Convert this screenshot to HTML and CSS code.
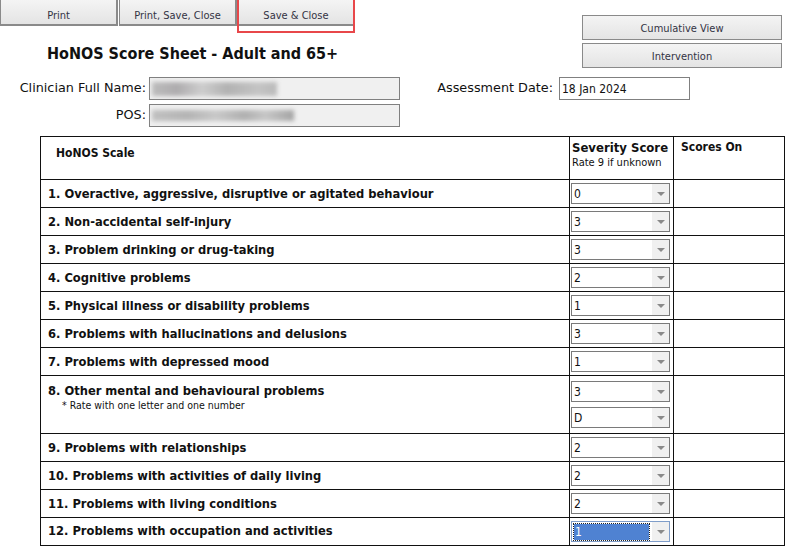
FILE: index.html
```html
<!DOCTYPE html>
<html lang="en">
<head>
    <meta charset="UTF-8">
    <title>HoNOS Score Sheet</title>
    <link rel="stylesheet" href="styles.css">
</head>
<body>
    <div class="head">
        <div class="head-left">
            <div class="toolbar">
                <button class="btn">Print</button>
                <button class="btn">Print, Save, Close</button>
                <span class="highlight"><button class="btn">Save &amp; Close</button></span>
            </div>
            <h1>HoNOS Score Sheet - Adult and 65+</h1>
        </div>
        <div class="head-right">
            <button class="btn side-btn">Cumulative View</button>
            <button class="btn side-btn">Intervention</button>
        </div>
    </div>

    <div class="fields">
        <label class="field-label">Clinician Full Name:</label>
        <div class="field readonly"><span class="blur blur-name"></span></div>
        <label class="field-label date-label">Assessment Date:</label>
        <div class="field date">18 Jan 2024</div>

        <label class="field-label">POS:</label>
        <div class="field readonly"><span class="blur blur-pos"></span></div>
    </div>

    <table class="scores">
        <thead>
            <tr class="head-row">
                <th class="scale-head">HoNOS Scale</th>
                <th class="severity-head">Severity Score<small>Rate 9 if unknown</small></th>
                <th class="on-head">Scores On</th>
            </tr>
        </thead>
        <tbody id="rows"></tbody>
    </table>

    <script>
        const items = [
            ['1. Overactive, aggressive, disruptive or agitated behaviour', ['0']],
            ['2. Non-accidental self-injury', ['3']],
            ['3. Problem drinking or drug-taking', ['3']],
            ['4. Cognitive problems', ['2']],
            ['5. Physical illness or disability problems', ['1']],
            ['6. Problems with hallucinations and delusions', ['3']],
            ['7. Problems with depressed mood', ['1']],
            ['8. Other mental and behavioural problems', ['3', 'D'], '* Rate with one letter and one number'],
            ['9. Problems with relationships', ['2']],
            ['10. Problems with activities of daily living', ['2']],
            ['11. Problems with living conditions', ['2']],
            ['12. Problems with occupation and activities', ['1']]
        ];

        const arrow = '<span class="arrow"><svg width="8" height="4" viewBox="0 0 8 4"><path d="M0 0h8L4 4z" fill="#8a8a8a"/></svg></span>';

        const rows = document.getElementById('rows');
        items.forEach(([label, values, note], i) => {
            const last = i === items.length - 1;
            const tr = document.createElement('tr');
            if (note) tr.className = 'tall';
            const selects = values.map(v =>
                `<div class="select${last ? ' focused' : ''}"><span class="value">${v}</span>${arrow}</div>`
            ).join('');
            tr.innerHTML = `
                <td class="item">${label}${note ? `<div class="note">${note}</div>` : ''}</td>
                <td class="score">${selects}</td>
                <td></td>
            `;
            rows.appendChild(tr);
        });
    </script>
</body>
</html>
```

FILE: styles.css
```css
/* General */
body {
    margin: 0;
    font-family: "DejaVu Sans Condensed", "DejaVu Sans", sans-serif;
    font-size: 12px;
    color: #111;
    background: #fff;
    width: 790px;
    height: 552px;
    overflow: hidden;
}

.btn {
    font-family: "DejaVu Sans Condensed", "DejaVu Sans", sans-serif;
    font-size: 11px;
    color: #333344;
    background: linear-gradient(#f4f4f4, #e4e4e4);
    border: 1px solid #8a8a8a;
    padding: 2px 0 0;
    cursor: pointer;
}

/* Header */
.head {
    display: flex;
    justify-content: space-between;
    height: 77px;
}

.toolbar {
    display: flex;
    align-items: flex-start;
    height: 32px;
}

.toolbar .btn {
    height: 26px;
    padding-top: 6px;
    border-top: none;
    border-width: 0 2px 2px 1px;
    width: 118px;
    margin-right: 1px;
}

.highlight {
    display: flex;
    border: 2px solid #e8474a;
    border-top: none;
    height: 31px;
    margin-left: -1px;
}

.highlight .btn {
    width: 114px;
    margin: 0;
    border-width: 0 0 2px 0;
}

h1 {
    margin: 12px 0 0 47px;
    font-size: 16px;
    font-weight: bold;
    color: #111;
}

.head-right {
    display: flex;
    flex-direction: column;
    gap: 3px;
    padding: 15px 8px 0 0;
}

.side-btn {
    width: 200px;
    height: 25px;
}

/* Fields */
.fields {
    display: grid;
    grid-template-columns: 149px 250px 160px 132px;
    grid-auto-rows: 23px;
    row-gap: 4px;
    font-family: "DejaVu Sans", sans-serif;
    font-size: 12.8px;
}

.field-label {
    display: flex;
    align-items: center;
    justify-content: flex-end;
    padding-right: 3px;
    margin-top: -2px;
}

.date-label {
    padding-right: 6px;
}

.field {
    border: 1px solid #808080;
    display: flex;
    align-items: center;
    padding-left: 2px;
}

.readonly {
    background: #f0f0f0;
    width: 247px;
}

.date {
    background: #fff;
    width: 127px;
    font-family: "DejaVu Sans Condensed", "DejaVu Sans", sans-serif;
    font-size: 12px;
}

.blur {
    display: block;
    height: 14px;
    filter: blur(2px);
    background: linear-gradient(90deg, #bcbcbc, #aeacae 20%, #cdcdcd 40%, #b2b2b2 60%, #c4c4c4 85%, #bababa);
}

.blur-name {
    width: 125px;
}

.blur-pos {
    width: 142px;
    height: 11px;
    background: linear-gradient(90deg, #c0c0c0, #b4b4b4 25%, #c8c8c8 45%, #b0b0b0 65%, #c6c6c6 80%, #a4a4a4);
}

/* Table */
.scores {
    margin: 9px 0 0 40px;
    width: 745px;
    border-collapse: collapse;
}

.scores th,
.scores td {
    border: 1px solid #111;
    padding: 0;
    text-align: left;
}

.head-row {
    height: 43px;
}

.head-row th {
    vertical-align: top;
    font-size: 12px;
}

.scale-head {
    width: 513px;
    padding: 9px 0 0 15px !important;
}

.severity-head {
    width: 101px;
    font-size: 13px !important;
    padding: 3px 0 0 2px !important;
    white-space: nowrap;
}

.severity-head small {
    display: block;
    font-size: 11px;
    font-weight: normal;
    margin-top: 1px;
}

.on-head {
    padding: 3px 0 0 7px !important;
}

.scores tbody tr {
    height: 28px;
}

.scores tbody tr.tall {
    height: 56px;
}

.item {
    font-weight: bold;
    font-size: 12.8px;
    padding-left: 7px !important;
}

.scores tbody tr:last-child .item {
    padding-bottom: 3px !important;
}

.tall .item {
    vertical-align: top;
    padding-top: 7px !important;
}

.note {
    font-weight: normal;
    font-size: 10.5px;
    margin: 1px 0 0 14px;
}

.score {
    padding: 0 0 0 1px !important;
}

.select {
    display: flex;
    align-items: stretch;
    width: 97px;
    height: 19px;
    border: 1px solid #7a7a7a;
    background: #fff;
}

.tall .select {
    margin: 5px 0;
}

.value {
    flex: 1;
    padding-left: 2px;
    display: flex;
    align-items: center;
    font-size: 12px;
}

.arrow {
    width: 17px;
    background: #f0f0f0;
    display: flex;
    align-items: center;
    justify-content: center;
}

.select.focused {
    border-color: #7f9dc9;
}

.select.focused .value {
    flex: none;
    width: 74px;
    margin: 2px 0 1px 2px;
    padding-left: 1px;
    background: #4f82d2;
    color: #fff;
    outline: 1px dotted #222;
}

.select.focused .arrow {
    margin-left: auto;
}
```
